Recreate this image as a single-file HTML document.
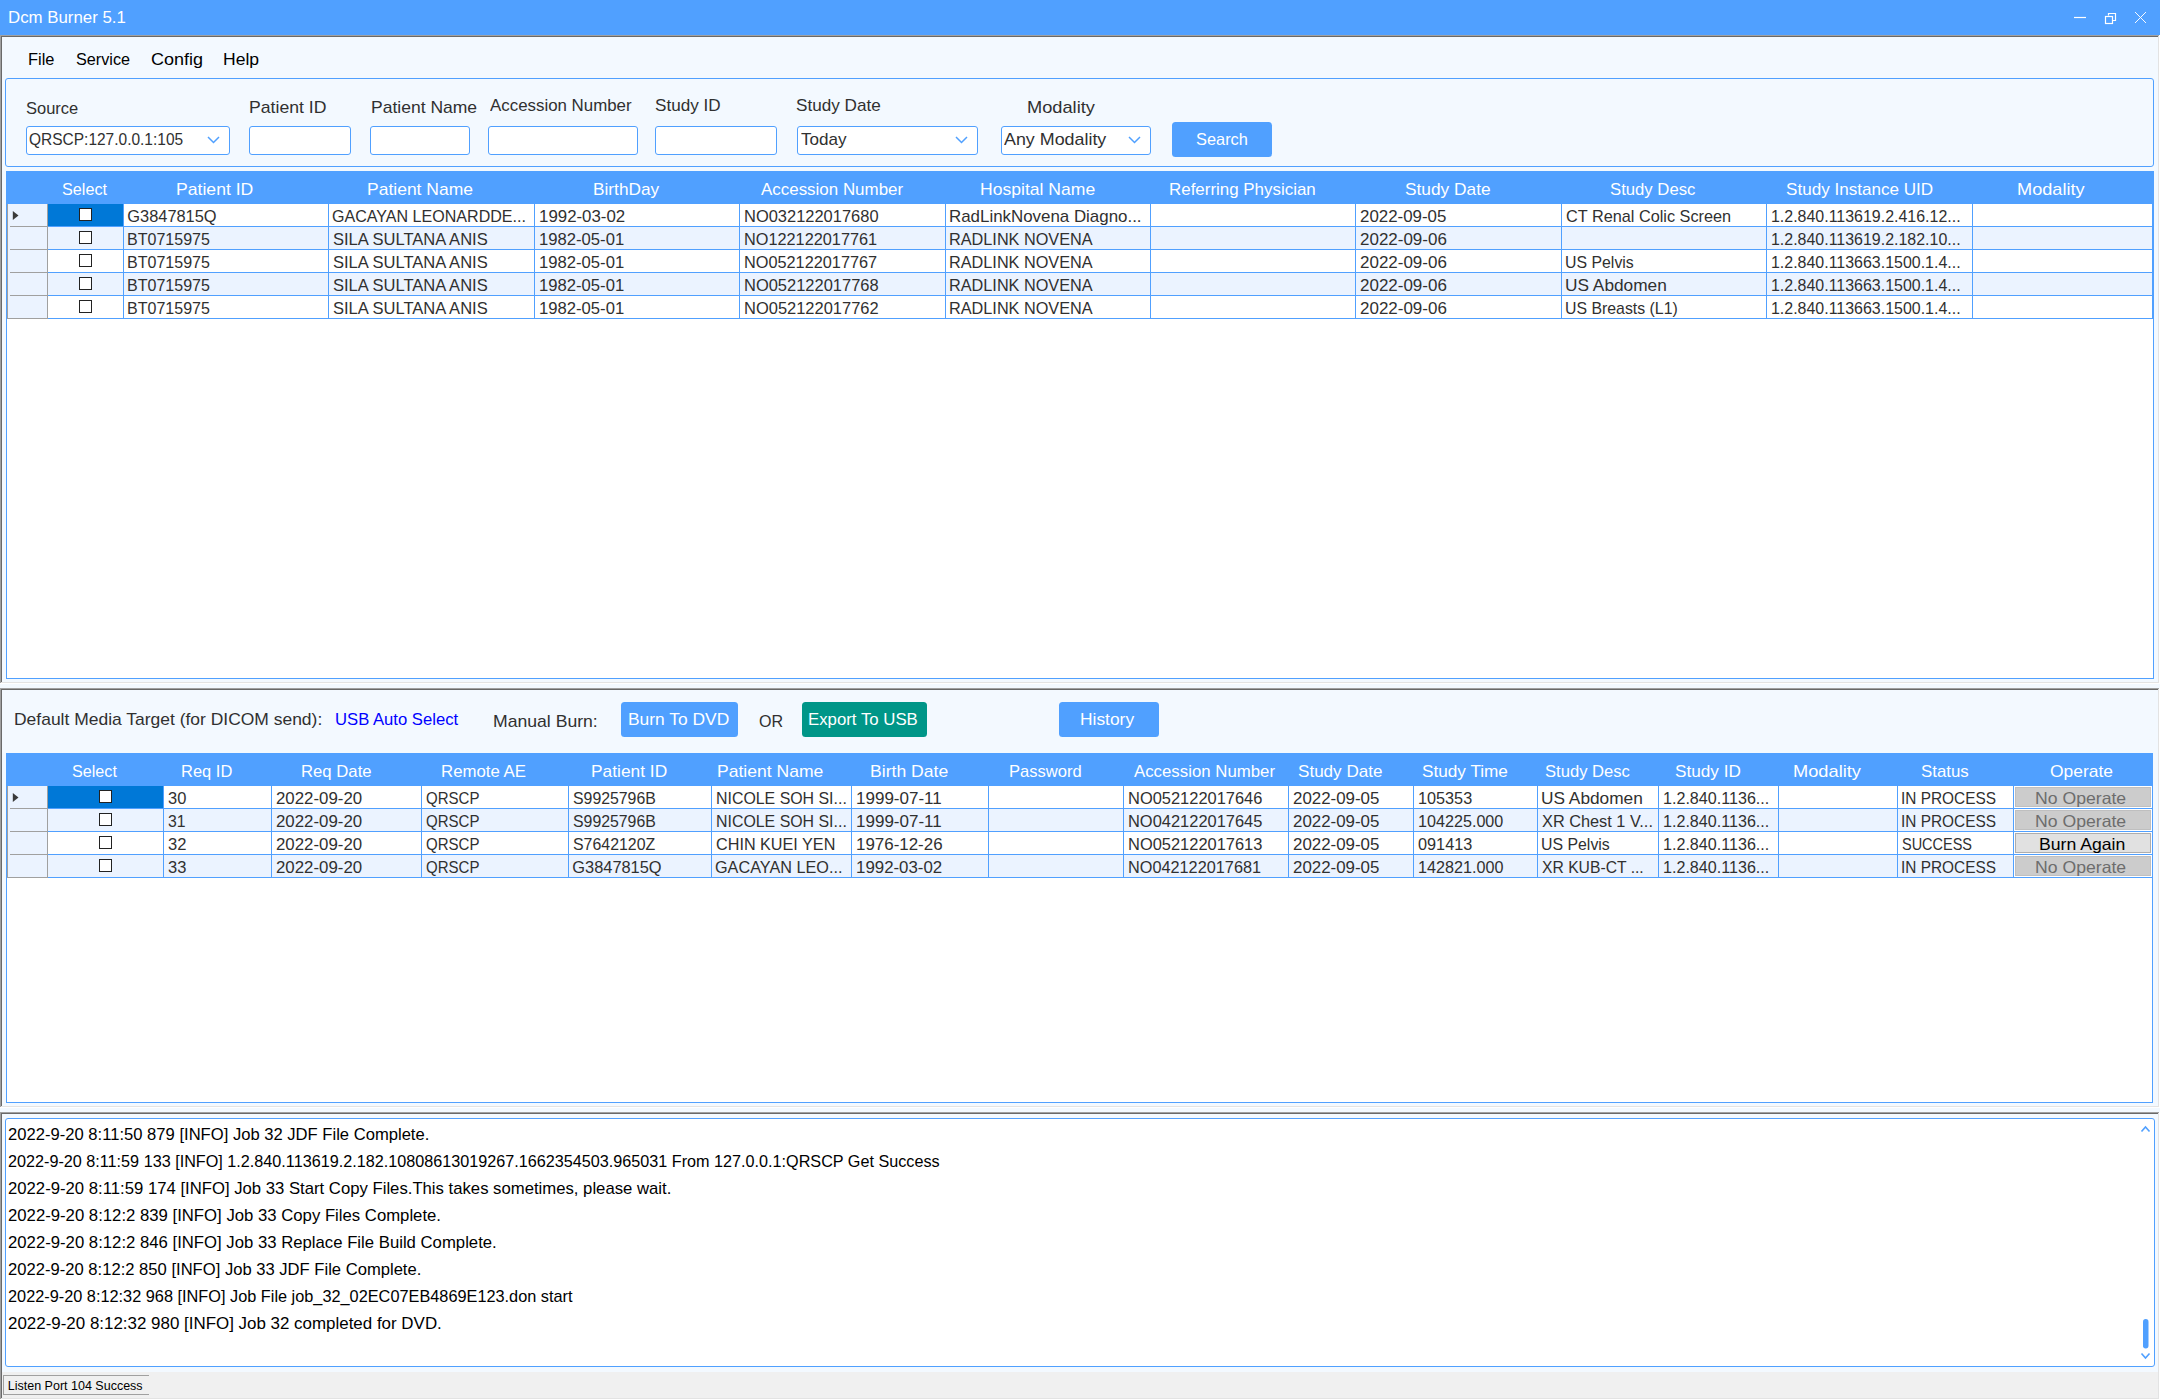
<!DOCTYPE html>
<html><head><meta charset="utf-8"><title>Dcm Burner 5.1</title>
<style>
html,body{margin:0;padding:0}
body{width:2160px;height:1400px;position:relative;overflow:hidden;background:#F3F9FF;font-family:"Liberation Sans",sans-serif}
.a{position:absolute;box-sizing:border-box}
.t{position:absolute;white-space:pre;line-height:20px;font-family:"Liberation Sans",sans-serif;transform-origin:0 0}
svg{position:absolute;overflow:visible}
</style></head><body>
<div class="a" style="left:0px;top:0px;width:2160px;height:35px;background:#50A0FF"></div>
<div class="t" style="left:8.36px;top:7px;font-size:16.5px;color:#FFFFFF;transform:scaleX(1.0195);">Dcm Burner 5.1</div>
<svg style="left:0;top:0" width="2160" height="35"><line x1="2074" y1="17.5" x2="2086" y2="17.5" stroke="#fff" stroke-width="1.2"/><path d="M2108.5 15.5 V13.5 H2115.5 V20.5 H2113" fill="none" stroke="#fff" stroke-width="1.2"/><rect x="2105.5" y="16.5" width="7" height="7" fill="none" stroke="#fff" stroke-width="1.2"/><path d="M2135 12 L2146 23 M2146 12 L2135 23" stroke="#fff" stroke-width="0.95"/></svg>
<div class="a" style="left:0px;top:35px;width:2160px;height:649px;background:#F3F9FF"></div>
<div class="a" style="left:0px;top:35px;width:2160px;height:1px;background:#A0A0A0"></div>
<div class="a" style="left:0px;top:36px;width:2159px;height:1px;background:#696969"></div>
<div class="a" style="left:0px;top:35px;width:1px;height:649px;background:#A0A0A0"></div>
<div class="a" style="left:1px;top:36px;width:1px;height:647px;background:#696969"></div>
<div class="a" style="left:0px;top:683px;width:2160px;height:1px;background:#FFFFFF"></div>
<div class="a" style="left:1px;top:682px;width:2158px;height:1px;background:#E3E3E3"></div>
<div class="a" style="left:2159px;top:35px;width:1px;height:649px;background:#FFFFFF"></div>
<div class="a" style="left:2158px;top:36px;width:1px;height:647px;background:#E3E3E3"></div>
<div class="t" style="left:27.50px;top:49px;font-size:16.5px;color:#000000;transform:scaleX(0.9946);">File</div>
<div class="t" style="left:75.56px;top:49px;font-size:16.5px;color:#000000;transform:scaleX(0.9824);">Service</div>
<div class="t" style="left:150.50px;top:49px;font-size:16.5px;color:#000000;transform:scaleX(1.0909);">Config</div>
<div class="t" style="left:223.20px;top:49px;font-size:16.5px;color:#000000;transform:scaleX(1.0622);">Help</div>
<div class="a" style="left:5px;top:78px;width:2149px;height:89px;border:1px solid #50A0FF;border-radius:3px;background:#F3F9FF"></div>
<div class="t" style="left:25.67px;top:99px;font-size:17px;color:#303030;transform:scaleX(0.9706);">Source</div>
<div class="t" style="left:248.51px;top:98px;font-size:17px;color:#303030;transform:scaleX(1.0375);">Patient ID</div>
<div class="t" style="left:371.12px;top:98px;font-size:17px;color:#303030;transform:scaleX(1.0302);">Patient Name</div>
<div class="t" style="left:490.08px;top:96px;font-size:17px;color:#303030;transform:scaleX(0.9927);">Accession Number</div>
<div class="t" style="left:654.54px;top:96px;font-size:17px;color:#303030;transform:scaleX(1.0069);">Study ID</div>
<div class="t" style="left:796.44px;top:96px;font-size:17px;color:#303030;transform:scaleX(1.0079);">Study Date</div>
<div class="t" style="left:1027.16px;top:98px;font-size:17px;color:#303030;transform:scaleX(1.0721);">Modality</div>
<div class="a" style="left:26px;top:126px;width:204px;height:29px;border:1px solid #50A0FF;border-radius:3px;background:#fff"></div>
<div class="t" style="left:28.88px;top:129px;font-size:16.5px;color:#303030;transform:scaleX(0.9388);">QRSCP:127.0.0.1:105</div>
<svg style="left:0;top:0" width="1" height="1"><path d="M208 137 L213.5 142.5 L219 137" fill="none" stroke="#50A0FF" stroke-width="1.5"/></svg>
<div class="a" style="left:249px;top:126px;width:102px;height:29px;border:1px solid #50A0FF;border-radius:3px;background:#fff"></div>
<div class="a" style="left:370px;top:126px;width:100px;height:29px;border:1px solid #50A0FF;border-radius:3px;background:#fff"></div>
<div class="a" style="left:488px;top:126px;width:150px;height:29px;border:1px solid #50A0FF;border-radius:3px;background:#fff"></div>
<div class="a" style="left:655px;top:126px;width:122px;height:29px;border:1px solid #50A0FF;border-radius:3px;background:#fff"></div>
<div class="a" style="left:797px;top:126px;width:181px;height:29px;border:1px solid #50A0FF;border-radius:3px;background:#fff"></div>
<div class="t" style="left:800.78px;top:130px;font-size:17px;color:#303030;transform:scaleX(1.0051);">Today</div>
<svg style="left:0;top:0" width="1" height="1"><path d="M956 137 L961.5 142.5 L967 137" fill="none" stroke="#50A0FF" stroke-width="1.5"/></svg>
<div class="a" style="left:1001px;top:126px;width:150px;height:29px;border:1px solid #50A0FF;border-radius:3px;background:#fff"></div>
<div class="t" style="left:1004.07px;top:130px;font-size:17px;color:#303030;transform:scaleX(1.0509);">Any Modality</div>
<svg style="left:0;top:0" width="1" height="1"><path d="M1129 137 L1134.5 142.5 L1140 137" fill="none" stroke="#50A0FF" stroke-width="1.5"/></svg>
<div class="a" style="left:1172px;top:122px;width:100px;height:35px;background:#50A0FF;border-radius:3.5px"></div>
<div class="t" style="left:1195.65px;top:129px;font-size:16.5px;color:#FFFFFF;transform:scaleX(0.9922);">Search</div>
<div class="a" style="left:6px;top:171px;width:2148px;height:508px;border:1px solid #50A0FF;background:#fff"></div>
<div class="a" style="left:6px;top:171px;width:2148px;height:33px;background:#50A0FF"></div>
<div class="t" style="left:61.99px;top:180px;font-size:17px;color:#FFFFFF;transform:scaleX(0.9517);">Select</div>
<div class="t" style="left:176.41px;top:180px;font-size:17px;color:#FFFFFF;transform:scaleX(1.0361);">Patient ID</div>
<div class="t" style="left:367.42px;top:180px;font-size:17px;color:#FFFFFF;transform:scaleX(1.0292);">Patient Name</div>
<div class="t" style="left:592.84px;top:180px;font-size:17px;color:#FFFFFF;transform:scaleX(1.0149);">BirthDay</div>
<div class="t" style="left:761.08px;top:180px;font-size:17px;color:#FFFFFF;transform:scaleX(0.9962);">Accession Number</div>
<div class="t" style="left:979.61px;top:180px;font-size:17px;color:#FFFFFF;transform:scaleX(1.0330);">Hospital Name</div>
<div class="t" style="left:1168.87px;top:180px;font-size:17px;color:#FFFFFF;transform:scaleX(0.9958);">Referring Physician</div>
<div class="t" style="left:1405.03px;top:180px;font-size:17px;color:#FFFFFF;transform:scaleX(1.0175);">Study Date</div>
<div class="t" style="left:1610.16px;top:180px;font-size:17px;color:#FFFFFF;transform:scaleX(0.9819);">Study Desc</div>
<div class="t" style="left:1785.84px;top:180px;font-size:17px;color:#FFFFFF;transform:scaleX(1.0050);">Study Instance UID</div>
<div class="t" style="left:2017.46px;top:180px;font-size:17px;color:#FFFFFF;transform:scaleX(1.0688);">Modality</div>
<div class="a" style="left:7px;top:204px;width:41px;height:115px;background:#EBF3FF"></div>
<div class="a" style="left:47px;top:204px;width:1px;height:115px;background:#A0A0A0"></div>
<div class="a" style="left:7px;top:204px;width:1px;height:115px;background:#A0A0A0"></div>
<div class="a" style="left:10px;top:226px;width:37px;height:1px;background:#A0A0A0"></div>
<div class="a" style="left:48px;top:226px;width:2105px;height:1px;background:#50A0FF"></div>
<div class="a" style="left:48px;top:227px;width:2105px;height:22px;background:#EBF3FF"></div>
<div class="a" style="left:10px;top:249px;width:37px;height:1px;background:#A0A0A0"></div>
<div class="a" style="left:48px;top:249px;width:2105px;height:1px;background:#50A0FF"></div>
<div class="a" style="left:10px;top:272px;width:37px;height:1px;background:#A0A0A0"></div>
<div class="a" style="left:48px;top:272px;width:2105px;height:1px;background:#50A0FF"></div>
<div class="a" style="left:48px;top:273px;width:2105px;height:22px;background:#EBF3FF"></div>
<div class="a" style="left:10px;top:295px;width:37px;height:1px;background:#A0A0A0"></div>
<div class="a" style="left:48px;top:295px;width:2105px;height:1px;background:#50A0FF"></div>
<div class="a" style="left:7px;top:318px;width:40px;height:1px;background:#A0A0A0"></div>
<div class="a" style="left:48px;top:318px;width:2105px;height:1px;background:#50A0FF"></div>
<div class="a" style="left:48px;top:204px;width:75px;height:22px;background:#0078D7"></div>
<svg style="left:0;top:0" width="1" height="1"><path d="M12.8 211 L18.5 215.5 L12.8 220 Z" fill="#3A3A3A"/></svg>
<div class="a" style="left:123px;top:204px;width:1px;height:115px;background:#50A0FF"></div>
<div class="a" style="left:328px;top:204px;width:1px;height:115px;background:#50A0FF"></div>
<div class="a" style="left:534px;top:204px;width:1px;height:115px;background:#50A0FF"></div>
<div class="a" style="left:739px;top:204px;width:1px;height:115px;background:#50A0FF"></div>
<div class="a" style="left:945px;top:204px;width:1px;height:115px;background:#50A0FF"></div>
<div class="a" style="left:1150px;top:204px;width:1px;height:115px;background:#50A0FF"></div>
<div class="a" style="left:1355px;top:204px;width:1px;height:115px;background:#50A0FF"></div>
<div class="a" style="left:1561px;top:204px;width:1px;height:115px;background:#50A0FF"></div>
<div class="a" style="left:1766px;top:204px;width:1px;height:115px;background:#50A0FF"></div>
<div class="a" style="left:1972px;top:204px;width:1px;height:115px;background:#50A0FF"></div>
<div class="a" style="left:2152px;top:204px;width:1px;height:115px;background:#50A0FF"></div>
<div class="a" style="left:79px;top:208px;width:13px;height:13px;border:1.5px solid #222;background:#fff"></div>
<div class="a" style="left:79px;top:231px;width:13px;height:13px;border:1.5px solid #222;background:#fff"></div>
<div class="a" style="left:79px;top:254px;width:13px;height:13px;border:1.5px solid #222;background:#fff"></div>
<div class="a" style="left:79px;top:277px;width:13px;height:13px;border:1.5px solid #222;background:#fff"></div>
<div class="a" style="left:79px;top:300px;width:13px;height:13px;border:1.5px solid #222;background:#fff"></div>
<div class="t" style="left:127.29px;top:206px;font-size:16.4px;color:#303030;">G3847815Q</div>
<div class="t" style="left:332.31px;top:206px;font-size:16.4px;color:#303030;transform:scaleX(0.9799);">GACAYAN LEONARDDE...</div>
<div class="t" style="left:538.94px;top:206px;font-size:16.4px;color:#303030;transform:scaleX(1.0285);">1992-03-02</div>
<div class="t" style="left:743.71px;top:206px;font-size:16.4px;color:#303030;transform:scaleX(1.0043);">NO032122017680</div>
<div class="t" style="left:949.17px;top:206px;font-size:16.4px;color:#303030;transform:scaleX(1.0308);">RadLinkNovena Diagno...</div>
<div class="t" style="left:1359.58px;top:206px;font-size:16.4px;color:#303030;transform:scaleX(1.0305);">2022-09-05</div>
<div class="t" style="left:1565.80px;top:206px;font-size:16.4px;color:#303030;transform:scaleX(0.9922);">CT Renal Colic Screen</div>
<div class="t" style="left:1771.02px;top:206px;font-size:16.4px;color:#303030;transform:scaleX(0.9735);">1.2.840.113619.2.416.12...</div>
<div class="t" style="left:126.74px;top:229px;font-size:16.4px;color:#303030;transform:scaleX(0.9784);">BT0715975</div>
<div class="t" style="left:332.74px;top:229px;font-size:16.4px;color:#303030;transform:scaleX(1.0088);">SILA SULTANA ANIS</div>
<div class="t" style="left:538.96px;top:229px;font-size:16.4px;color:#303030;transform:scaleX(1.0159);">1982-05-01</div>
<div class="t" style="left:743.72px;top:229px;font-size:16.4px;color:#303030;transform:scaleX(0.9937);">NO122122017761</div>
<div class="t" style="left:949.22px;top:229px;font-size:16.4px;color:#303030;transform:scaleX(0.9918);">RADLINK NOVENA</div>
<div class="t" style="left:1359.58px;top:229px;font-size:16.4px;color:#303030;transform:scaleX(1.0357);">2022-09-06</div>
<div class="t" style="left:1771.02px;top:229px;font-size:16.4px;color:#303030;transform:scaleX(0.9735);">1.2.840.113619.2.182.10...</div>
<div class="t" style="left:126.74px;top:252px;font-size:16.4px;color:#303030;transform:scaleX(0.9784);">BT0715975</div>
<div class="t" style="left:332.74px;top:252px;font-size:16.4px;color:#303030;transform:scaleX(1.0088);">SILA SULTANA ANIS</div>
<div class="t" style="left:538.96px;top:252px;font-size:16.4px;color:#303030;transform:scaleX(1.0159);">1982-05-01</div>
<div class="t" style="left:743.72px;top:252px;font-size:16.4px;color:#303030;transform:scaleX(0.9939);">NO052122017767</div>
<div class="t" style="left:949.22px;top:252px;font-size:16.4px;color:#303030;transform:scaleX(0.9918);">RADLINK NOVENA</div>
<div class="t" style="left:1359.58px;top:252px;font-size:16.4px;color:#303030;transform:scaleX(1.0357);">2022-09-06</div>
<div class="t" style="left:1565.32px;top:252px;font-size:16.4px;color:#303030;transform:scaleX(0.9682);">US Pelvis</div>
<div class="t" style="left:1771.02px;top:252px;font-size:16.4px;color:#303030;transform:scaleX(0.9735);">1.2.840.113663.1500.1.4...</div>
<div class="t" style="left:126.74px;top:275px;font-size:16.4px;color:#303030;transform:scaleX(0.9784);">BT0715975</div>
<div class="t" style="left:332.74px;top:275px;font-size:16.4px;color:#303030;transform:scaleX(1.0088);">SILA SULTANA ANIS</div>
<div class="t" style="left:538.96px;top:275px;font-size:16.4px;color:#303030;transform:scaleX(1.0159);">1982-05-01</div>
<div class="t" style="left:743.71px;top:275px;font-size:16.4px;color:#303030;transform:scaleX(1.0048);">NO052122017768</div>
<div class="t" style="left:949.22px;top:275px;font-size:16.4px;color:#303030;transform:scaleX(0.9918);">RADLINK NOVENA</div>
<div class="t" style="left:1359.58px;top:275px;font-size:16.4px;color:#303030;transform:scaleX(1.0357);">2022-09-06</div>
<div class="t" style="left:1565.20px;top:275px;font-size:16.4px;color:#303030;transform:scaleX(1.0542);">US Abdomen</div>
<div class="t" style="left:1771.02px;top:275px;font-size:16.4px;color:#303030;transform:scaleX(0.9735);">1.2.840.113663.1500.1.4...</div>
<div class="t" style="left:126.74px;top:298px;font-size:16.4px;color:#303030;transform:scaleX(0.9784);">BT0715975</div>
<div class="t" style="left:332.74px;top:298px;font-size:16.4px;color:#303030;transform:scaleX(1.0088);">SILA SULTANA ANIS</div>
<div class="t" style="left:538.96px;top:298px;font-size:16.4px;color:#303030;transform:scaleX(1.0159);">1982-05-01</div>
<div class="t" style="left:743.70px;top:298px;font-size:16.4px;color:#303030;transform:scaleX(1.0053);">NO052122017762</div>
<div class="t" style="left:949.22px;top:298px;font-size:16.4px;color:#303030;transform:scaleX(0.9918);">RADLINK NOVENA</div>
<div class="t" style="left:1359.58px;top:298px;font-size:16.4px;color:#303030;transform:scaleX(1.0357);">2022-09-06</div>
<div class="t" style="left:1565.32px;top:298px;font-size:16.4px;color:#303030;transform:scaleX(0.9668);">US Breasts (L1)</div>
<div class="t" style="left:1771.02px;top:298px;font-size:16.4px;color:#303030;transform:scaleX(0.9735);">1.2.840.113663.1500.1.4...</div>
<div class="a" style="left:0px;top:688px;width:2160px;height:420px;background:#F3F9FF"></div>
<div class="a" style="left:0px;top:688px;width:2160px;height:1px;background:#A0A0A0"></div>
<div class="a" style="left:0px;top:689px;width:2159px;height:1px;background:#696969"></div>
<div class="a" style="left:0px;top:688px;width:1px;height:420px;background:#A0A0A0"></div>
<div class="a" style="left:1px;top:689px;width:1px;height:418px;background:#696969"></div>
<div class="a" style="left:0px;top:1107px;width:2160px;height:1px;background:#FFFFFF"></div>
<div class="a" style="left:1px;top:1106px;width:2158px;height:1px;background:#E3E3E3"></div>
<div class="a" style="left:2159px;top:688px;width:1px;height:420px;background:#FFFFFF"></div>
<div class="a" style="left:2158px;top:689px;width:1px;height:418px;background:#E3E3E3"></div>
<div class="t" style="left:13.52px;top:710px;font-size:17px;color:#303030;transform:scaleX(1.0270);">Default Media Target (for DICOM send):</div>
<div class="t" style="left:334.76px;top:709px;font-size:16.5px;color:#0000FF;transform:scaleX(1.0092);">USB Auto Select</div>
<div class="t" style="left:493.41px;top:712px;font-size:17px;color:#303030;transform:scaleX(1.0357);">Manual Burn:</div>
<div class="a" style="left:621px;top:702px;width:117px;height:35px;background:#50A0FF;border-radius:3.5px"></div>
<div class="t" style="left:627.63px;top:710px;font-size:17px;color:#FFFFFF;transform:scaleX(1.0238);">Burn To DVD</div>
<div class="t" style="left:758.84px;top:712px;font-size:17px;color:#303030;transform:scaleX(0.9460);">OR</div>
<div class="a" style="left:802px;top:702px;width:125px;height:35px;background:#009688;border-radius:3.5px"></div>
<div class="t" style="left:807.58px;top:710px;font-size:17px;color:#FFFFFF;transform:scaleX(0.9876);">Export To USB</div>
<div class="a" style="left:1059px;top:702px;width:100px;height:35px;background:#50A0FF;border-radius:3.5px"></div>
<div class="t" style="left:1079.93px;top:710px;font-size:17px;color:#FFFFFF;transform:scaleX(1.0226);">History</div>
<div class="a" style="left:6px;top:753px;width:2147px;height:350px;border:1px solid #50A0FF;background:#fff"></div>
<div class="a" style="left:6px;top:753px;width:2147px;height:33px;background:#50A0FF"></div>
<div class="t" style="left:71.89px;top:762px;font-size:17px;color:#FFFFFF;transform:scaleX(0.9496);">Select</div>
<div class="t" style="left:180.61px;top:762px;font-size:17px;color:#FFFFFF;transform:scaleX(0.9692);">Req ID</div>
<div class="t" style="left:300.59px;top:762px;font-size:17px;color:#FFFFFF;transform:scaleX(0.9828);">Req Date</div>
<div class="t" style="left:441.18px;top:762px;font-size:17px;color:#FFFFFF;transform:scaleX(0.9880);">Remote AE</div>
<div class="t" style="left:591.03px;top:762px;font-size:17px;color:#FFFFFF;transform:scaleX(1.0209);">Patient ID</div>
<div class="t" style="left:717.31px;top:762px;font-size:17px;color:#FFFFFF;transform:scaleX(1.0322);">Patient Name</div>
<div class="t" style="left:870.21px;top:762px;font-size:17px;color:#FFFFFF;transform:scaleX(1.0353);">Birth Date</div>
<div class="t" style="left:1008.80px;top:762px;font-size:17px;color:#FFFFFF;transform:scaleX(0.9736);">Password</div>
<div class="t" style="left:1134.49px;top:762px;font-size:17px;color:#FFFFFF;transform:scaleX(0.9885);">Accession Number</div>
<div class="t" style="left:1297.95px;top:762px;font-size:17px;color:#FFFFFF;transform:scaleX(1.0042);">Study Date</div>
<div class="t" style="left:1421.64px;top:762px;font-size:17px;color:#FFFFFF;transform:scaleX(1.0103);">Study Time</div>
<div class="t" style="left:1544.67px;top:762px;font-size:17px;color:#FFFFFF;transform:scaleX(0.9761);">Study Desc</div>
<div class="t" style="left:1674.64px;top:762px;font-size:17px;color:#FFFFFF;transform:scaleX(1.0100);">Study ID</div>
<div class="t" style="left:1793.35px;top:762px;font-size:17px;color:#FFFFFF;transform:scaleX(1.0737);">Modality</div>
<div class="t" style="left:1920.86px;top:762px;font-size:17px;color:#FFFFFF;transform:scaleX(0.9911);">Status</div>
<div class="t" style="left:2049.58px;top:762px;font-size:17px;color:#FFFFFF;transform:scaleX(1.0245);">Operate</div>
<div class="a" style="left:7px;top:786px;width:41px;height:92px;background:#EBF3FF"></div>
<div class="a" style="left:47px;top:786px;width:1px;height:92px;background:#A0A0A0"></div>
<div class="a" style="left:7px;top:786px;width:1px;height:92px;background:#A0A0A0"></div>
<div class="a" style="left:10px;top:808px;width:37px;height:1px;background:#A0A0A0"></div>
<div class="a" style="left:48px;top:808px;width:2104px;height:1px;background:#50A0FF"></div>
<div class="a" style="left:48px;top:809px;width:2104px;height:22px;background:#EBF3FF"></div>
<div class="a" style="left:10px;top:831px;width:37px;height:1px;background:#A0A0A0"></div>
<div class="a" style="left:48px;top:831px;width:2104px;height:1px;background:#50A0FF"></div>
<div class="a" style="left:10px;top:854px;width:37px;height:1px;background:#A0A0A0"></div>
<div class="a" style="left:48px;top:854px;width:2104px;height:1px;background:#50A0FF"></div>
<div class="a" style="left:48px;top:855px;width:2104px;height:22px;background:#EBF3FF"></div>
<div class="a" style="left:7px;top:877px;width:40px;height:1px;background:#A0A0A0"></div>
<div class="a" style="left:48px;top:877px;width:2104px;height:1px;background:#50A0FF"></div>
<div class="a" style="left:48px;top:786px;width:115px;height:22px;background:#0078D7"></div>
<svg style="left:0;top:0" width="1" height="1"><path d="M12.8 793 L18.5 797.5 L12.8 802 Z" fill="#3A3A3A"/></svg>
<div class="a" style="left:163px;top:786px;width:1px;height:92px;background:#50A0FF"></div>
<div class="a" style="left:271px;top:786px;width:1px;height:92px;background:#50A0FF"></div>
<div class="a" style="left:421px;top:786px;width:1px;height:92px;background:#50A0FF"></div>
<div class="a" style="left:568px;top:786px;width:1px;height:92px;background:#50A0FF"></div>
<div class="a" style="left:711px;top:786px;width:1px;height:92px;background:#50A0FF"></div>
<div class="a" style="left:851px;top:786px;width:1px;height:92px;background:#50A0FF"></div>
<div class="a" style="left:988px;top:786px;width:1px;height:92px;background:#50A0FF"></div>
<div class="a" style="left:1123px;top:786px;width:1px;height:92px;background:#50A0FF"></div>
<div class="a" style="left:1288px;top:786px;width:1px;height:92px;background:#50A0FF"></div>
<div class="a" style="left:1413px;top:786px;width:1px;height:92px;background:#50A0FF"></div>
<div class="a" style="left:1537px;top:786px;width:1px;height:92px;background:#50A0FF"></div>
<div class="a" style="left:1658px;top:786px;width:1px;height:92px;background:#50A0FF"></div>
<div class="a" style="left:1778px;top:786px;width:1px;height:92px;background:#50A0FF"></div>
<div class="a" style="left:1897px;top:786px;width:1px;height:92px;background:#50A0FF"></div>
<div class="a" style="left:2013px;top:786px;width:1px;height:92px;background:#50A0FF"></div>
<div class="a" style="left:2151px;top:786px;width:1px;height:92px;background:#50A0FF"></div>
<div class="a" style="left:99px;top:790px;width:13px;height:13px;border:1.5px solid #222;background:#fff"></div>
<div class="a" style="left:99px;top:813px;width:13px;height:13px;border:1.5px solid #222;background:#fff"></div>
<div class="a" style="left:99px;top:836px;width:13px;height:13px;border:1.5px solid #222;background:#fff"></div>
<div class="a" style="left:99px;top:859px;width:13px;height:13px;border:1.5px solid #222;background:#fff"></div>
<div class="t" style="left:167.81px;top:788px;font-size:16.4px;color:#303030;transform:scaleX(1.0035);">30</div>
<div class="t" style="left:275.59px;top:788px;font-size:16.4px;color:#303030;transform:scaleX(1.0275);">2022-09-20</div>
<div class="t" style="left:425.90px;top:788px;font-size:16.4px;color:#303030;transform:scaleX(0.9166);">QRSCP</div>
<div class="t" style="left:572.77px;top:788px;font-size:16.4px;color:#303030;transform:scaleX(0.9666);">S9925796B</div>
<div class="t" style="left:715.75px;top:788px;font-size:16.4px;color:#303030;transform:scaleX(0.9703);">NICOLE SOH SI...</div>
<div class="t" style="left:855.93px;top:788px;font-size:16.4px;color:#303030;transform:scaleX(1.0377);">1999-07-11</div>
<div class="t" style="left:1127.71px;top:788px;font-size:16.4px;color:#303030;transform:scaleX(1.0033);">NO052122017646</div>
<div class="t" style="left:1292.58px;top:788px;font-size:16.4px;color:#303030;transform:scaleX(1.0305);">2022-09-05</div>
<div class="t" style="left:1417.99px;top:788px;font-size:16.4px;color:#303030;transform:scaleX(0.9906);">105353</div>
<div class="t" style="left:1541.20px;top:788px;font-size:16.4px;color:#303030;transform:scaleX(1.0542);">US Abdomen</div>
<div class="t" style="left:1663.01px;top:788px;font-size:16.4px;color:#303030;transform:scaleX(0.9827);">1.2.840.1136...</div>
<div class="t" style="left:1901.16px;top:788px;font-size:16.4px;color:#303030;transform:scaleX(0.9397);">IN PROCESS</div>
<div class="t" style="left:167.84px;top:811px;font-size:16.4px;color:#303030;transform:scaleX(0.9627);">31</div>
<div class="t" style="left:275.59px;top:811px;font-size:16.4px;color:#303030;transform:scaleX(1.0275);">2022-09-20</div>
<div class="t" style="left:425.90px;top:811px;font-size:16.4px;color:#303030;transform:scaleX(0.9166);">QRSCP</div>
<div class="t" style="left:572.77px;top:811px;font-size:16.4px;color:#303030;transform:scaleX(0.9666);">S9925796B</div>
<div class="t" style="left:715.75px;top:811px;font-size:16.4px;color:#303030;transform:scaleX(0.9703);">NICOLE SOH SI...</div>
<div class="t" style="left:855.93px;top:811px;font-size:16.4px;color:#303030;transform:scaleX(1.0377);">1999-07-11</div>
<div class="t" style="left:1127.71px;top:811px;font-size:16.4px;color:#303030;transform:scaleX(1.0031);">NO042122017645</div>
<div class="t" style="left:1292.58px;top:811px;font-size:16.4px;color:#303030;transform:scaleX(1.0305);">2022-09-05</div>
<div class="t" style="left:1418.00px;top:811px;font-size:16.4px;color:#303030;transform:scaleX(0.9855);">104225.000</div>
<div class="t" style="left:1541.90px;top:811px;font-size:16.4px;color:#303030;transform:scaleX(0.9953);">XR Chest 1 V...</div>
<div class="t" style="left:1663.01px;top:811px;font-size:16.4px;color:#303030;transform:scaleX(0.9827);">1.2.840.1136...</div>
<div class="t" style="left:1901.16px;top:811px;font-size:16.4px;color:#303030;transform:scaleX(0.9397);">IN PROCESS</div>
<div class="t" style="left:167.80px;top:834px;font-size:16.4px;color:#303030;transform:scaleX(1.0120);">32</div>
<div class="t" style="left:275.59px;top:834px;font-size:16.4px;color:#303030;transform:scaleX(1.0275);">2022-09-20</div>
<div class="t" style="left:425.90px;top:834px;font-size:16.4px;color:#303030;transform:scaleX(0.9166);">QRSCP</div>
<div class="t" style="left:572.77px;top:834px;font-size:16.4px;color:#303030;transform:scaleX(0.9700);">S7642120Z</div>
<div class="t" style="left:715.80px;top:834px;font-size:16.4px;color:#303030;transform:scaleX(0.9876);">CHIN KUEI YEN</div>
<div class="t" style="left:855.94px;top:834px;font-size:16.4px;color:#303030;transform:scaleX(1.0326);">1976-12-26</div>
<div class="t" style="left:1127.71px;top:834px;font-size:16.4px;color:#303030;transform:scaleX(1.0033);">NO052122017613</div>
<div class="t" style="left:1292.58px;top:834px;font-size:16.4px;color:#303030;transform:scaleX(1.0305);">2022-09-05</div>
<div class="t" style="left:1417.92px;top:834px;font-size:16.4px;color:#303030;transform:scaleX(0.9919);">091413</div>
<div class="t" style="left:1541.32px;top:834px;font-size:16.4px;color:#303030;transform:scaleX(0.9682);">US Pelvis</div>
<div class="t" style="left:1663.01px;top:834px;font-size:16.4px;color:#303030;transform:scaleX(0.9827);">1.2.840.1136...</div>
<div class="t" style="left:1901.84px;top:834px;font-size:16.4px;color:#303030;transform:scaleX(0.8835);">SUCCESS</div>
<div class="t" style="left:167.80px;top:857px;font-size:16.4px;color:#303030;transform:scaleX(1.0085);">33</div>
<div class="t" style="left:275.59px;top:857px;font-size:16.4px;color:#303030;transform:scaleX(1.0275);">2022-09-20</div>
<div class="t" style="left:425.90px;top:857px;font-size:16.4px;color:#303030;transform:scaleX(0.9166);">QRSCP</div>
<div class="t" style="left:572.29px;top:857px;font-size:16.4px;color:#303030;">G3847815Q</div>
<div class="t" style="left:715.30px;top:857px;font-size:16.4px;color:#303030;transform:scaleX(0.9897);">GACAYAN LEO...</div>
<div class="t" style="left:855.94px;top:857px;font-size:16.4px;color:#303030;transform:scaleX(1.0285);">1992-03-02</div>
<div class="t" style="left:1127.72px;top:857px;font-size:16.4px;color:#303030;transform:scaleX(0.9930);">NO042122017681</div>
<div class="t" style="left:1292.58px;top:857px;font-size:16.4px;color:#303030;transform:scaleX(1.0305);">2022-09-05</div>
<div class="t" style="left:1418.00px;top:857px;font-size:16.4px;color:#303030;transform:scaleX(0.9867);">142821.000</div>
<div class="t" style="left:1541.92px;top:857px;font-size:16.4px;color:#303030;transform:scaleX(0.9572);">XR KUB-CT ...</div>
<div class="t" style="left:1663.01px;top:857px;font-size:16.4px;color:#303030;transform:scaleX(0.9827);">1.2.840.1136...</div>
<div class="t" style="left:1901.16px;top:857px;font-size:16.4px;color:#303030;transform:scaleX(0.9397);">IN PROCESS</div>
<div class="a" style="left:2014px;top:786px;width:138px;height:22px;background:#fff"></div>
<div class="a" style="left:2015px;top:787px;width:136px;height:20px;border:1px solid #BFBFBF;background:#CCCCCC"></div>
<div class="t" style="left:2035.40px;top:788px;font-size:16.5px;color:#6D6D6D;transform:scaleX(1.0687);">No Operate</div>
<div class="a" style="left:2014px;top:809px;width:138px;height:22px;background:#fff"></div>
<div class="a" style="left:2015px;top:810px;width:136px;height:20px;border:1px solid #BFBFBF;background:#CCCCCC"></div>
<div class="t" style="left:2035.40px;top:811px;font-size:16.5px;color:#6D6D6D;transform:scaleX(1.0687);">No Operate</div>
<div class="a" style="left:2014px;top:832px;width:138px;height:22px;background:#fff"></div>
<div class="a" style="left:2015px;top:833px;width:136px;height:20px;border:1px solid #ADADAD;background:#E1E1E1"></div>
<div class="t" style="left:2038.50px;top:834px;font-size:16.5px;color:#000;transform:scaleX(1.0683);">Burn Again</div>
<div class="a" style="left:2014px;top:855px;width:138px;height:22px;background:#fff"></div>
<div class="a" style="left:2015px;top:856px;width:136px;height:20px;border:1px solid #BFBFBF;background:#CCCCCC"></div>
<div class="t" style="left:2035.40px;top:857px;font-size:16.5px;color:#6D6D6D;transform:scaleX(1.0687);">No Operate</div>
<div class="a" style="left:0px;top:1112px;width:2160px;height:288px;background:#F3F9FF"></div>
<div class="a" style="left:0px;top:1112px;width:2160px;height:1px;background:#A0A0A0"></div>
<div class="a" style="left:0px;top:1113px;width:2159px;height:1px;background:#696969"></div>
<div class="a" style="left:0px;top:1112px;width:1px;height:288px;background:#A0A0A0"></div>
<div class="a" style="left:1px;top:1113px;width:1px;height:286px;background:#696969"></div>
<div class="a" style="left:0px;top:1399px;width:2160px;height:1px;background:#FFFFFF"></div>
<div class="a" style="left:1px;top:1398px;width:2158px;height:1px;background:#E3E3E3"></div>
<div class="a" style="left:2159px;top:1112px;width:1px;height:288px;background:#FFFFFF"></div>
<div class="a" style="left:2158px;top:1113px;width:1px;height:286px;background:#E3E3E3"></div>
<div class="a" style="left:5px;top:1118px;width:2150px;height:249px;border:1px solid #50A0FF;border-radius:3px;background:#fff"></div>
<div class="t" style="left:8.11px;top:1125px;font-size:16.6px;color:#000000;">2022-9-20 8:11:50 879 [INFO] Job 32 JDF File Complete.</div>
<div class="t" style="left:8.13px;top:1152px;font-size:16.6px;color:#000000;transform:scaleX(0.9757);">2022-9-20 8:11:59 133 [INFO] 1.2.840.113619.2.182.10808613019267.1662354503.965031 From 127.0.0.1:QRSCP Get Success</div>
<div class="t" style="left:8.10px;top:1179px;font-size:16.6px;color:#000000;transform:scaleX(1.0063);">2022-9-20 8:11:59 174 [INFO] Job 33 Start Copy Files.This takes sometimes, please wait.</div>
<div class="t" style="left:8.10px;top:1206px;font-size:16.6px;color:#000000;transform:scaleX(1.0074);">2022-9-20 8:12:2 839 [INFO] Job 33 Copy Files Complete.</div>
<div class="t" style="left:8.10px;top:1233px;font-size:16.6px;color:#000000;transform:scaleX(1.0073);">2022-9-20 8:12:2 846 [INFO] Job 33 Replace File Build Complete.</div>
<div class="t" style="left:8.11px;top:1260px;font-size:16.6px;color:#000000;">2022-9-20 8:12:2 850 [INFO] Job 33 JDF File Complete.</div>
<div class="t" style="left:8.12px;top:1287px;font-size:16.6px;color:#000000;transform:scaleX(0.9823);">2022-9-20 8:12:32 968 [INFO] Job File job_32_02EC07EB4869E123.don start</div>
<div class="t" style="left:8.09px;top:1314px;font-size:16.6px;color:#000000;transform:scaleX(1.0202);">2022-9-20 8:12:32 980 [INFO] Job 32 completed for DVD.</div>
<svg style="left:0;top:0" width="1" height="1"><path d="M2141.5 1131.5 L2145.5 1127 L2149.5 1131.5" fill="none" stroke="#50A0FF" stroke-width="1.6"/><rect x="2143" y="1319" width="5.5" height="29.5" rx="2.7" fill="#50A0FF"/><path d="M2141.5 1353.5 L2145.5 1358 L2149.5 1353.5" fill="none" stroke="#50A0FF" stroke-width="1.6"/></svg>
<div class="a" style="left:2px;top:1372px;width:2156px;height:26px;background:#F0F0F0"></div>
<div class="a" style="left:3px;top:1375px;width:146px;height:20px;border:1px solid #A0A0A0;border-right:none;background:#F0F0F0"></div>
<div class="t" style="left:7.79px;top:1376px;font-size:12.5px;color:#000;">Listen Port 104 Success</div>
</body></html>
